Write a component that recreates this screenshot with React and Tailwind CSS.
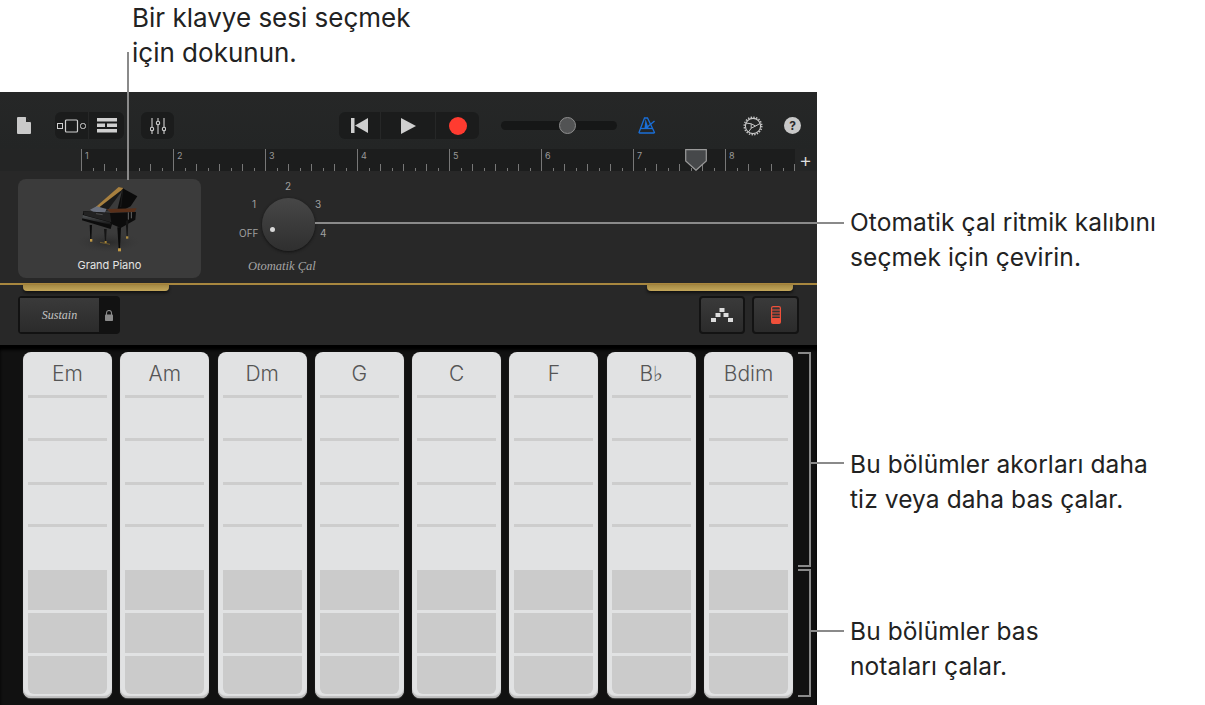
import React from 'react';

const chords = ['Em', 'Am', 'Dm', 'G', 'C', 'F', 'B♭', 'Bdim'];
const bars = [1, 2, 3, 4, 5, 6, 7, 8];
const ticks = [1, 2, 3, 4, 5, 6, 7];

const Piano = () => (
  <svg viewBox="0 0 300 225" className="w-[100px] h-[75px] shrink-0">
    <defs>
      <radialGradient id="floor">
        <stop offset="0%" stopColor="#222" stopOpacity="0.7" />
        <stop offset="100%" stopColor="#333" stopOpacity="0" />
      </radialGradient>
      <linearGradient id="front" x1="0" y1="0" x2="0" y2="1">
        <stop offset="0%" stopColor="#55585a" />
        <stop offset="100%" stopColor="#111" />
      </linearGradient>
    </defs>
    <ellipse cx="145" cy="190" rx="95" ry="30" fill="url(#floor)" />
    <path d="M188 28 L232 52 L212 82 L192 92 L172 92 Z" fill="#0b0b0b" />
    <path d="M178 25 L192 28 L142 95 L106 92 Z" fill="#1a1a1a" />
    <path d="M176 24 L190 27 L184 34 L108 92 L103 88 Z" fill="#a8803f" />
    <path d="M188 34 L182 84" stroke="#222" strokeWidth="2" fill="none" />
    <path d="M140 90 L230 88 L224 99 L152 101 Z" fill="#59301a" />
    <path d="M90 92 L110 82 L140 90 L134 101 L100 99 Z" fill="#6c7280" />
    <path d="M70 96 L100 98 L152 102 L228 99 L226 122 L182 147 L156 136 L152 150 L66 124 Z" fill="#0c0c0c" />
    <path d="M68 108 L150 130 L154 138 L66 118 Z" fill="url(#front)" />
    <path d="M70 97 L150 103 L154 130 L72 108 Z" fill="#222" />
    <path d="M108 104 L128 107" stroke="#777" strokeWidth="1.5" />
    <path d="M205 100 L205 122 M214 99 L214 118" stroke="#666" strokeWidth="3" />
    <path d="M89 138 L96 138 L94 180 L91 180 Z" fill="#0a0a0a" />
    <path d="M132 150 L140 150 L138 186 L135 186 Z" fill="#151515" />
    <path d="M172 145 L183 145 L180 208 L176 208 Z" fill="#0a0a0a" />
    <path d="M197 125 L205 122 L203 172 L200 172 Z" fill="#151515" />
    <path d="M120 190 L150 196" stroke="#6d5a2e" strokeWidth="3" />
    <rect x="90" y="180" width="7" height="8" fill="#c29a45" />
    <rect x="134" y="186" width="6" height="6" fill="#a58438" />
    <rect x="174" y="208" width="9" height="9" fill="#c29a45" />
    <rect x="198" y="172" width="7" height="7" fill="#b08e40" />
  </svg>
);

const ChordStrip = ({ name }) => (
  <div className="w-[89px] h-[346px] shrink-0 flex flex-col px-[5px] pb-1 rounded-lg bg-[#e1e2e3] shadow-[inset_0_-2px_1px_#bdbdbd,0_1px_1px_#555]">
    <div className="h-[43px] flex items-center justify-center text-[21px] font-light text-[#555]">{name}</div>
    <div className="h-[43px] border-t-[3px] border-[#cdcdcd]" />
    <div className="h-[44px] border-t-[3px] border-[#cdcdcd]" />
    <div className="h-[42px] border-t-[3px] border-[#cdcdcd]" />
    <div className="h-[46px] border-t-[3px] border-[#cdcdcd]" />
    <div className="flex flex-col gap-[3px]">
      <div className="h-[40px] bg-[#cbcbcb]" />
      <div className="h-[40px] bg-[#cbcbcb]" />
      <div className="h-[38px] bg-[#cbcbcb] rounded-b-md" />
    </div>
  </div>
);

const Ruler = () => (
  <div className="w-[714px] h-[22px] flex overflow-hidden bg-[#1c1d1d]">
    {bars.map(bar => (
      <div key={bar} className="relative w-[92px] h-full shrink-0 flex items-end border-l border-[#777]">
        <span className="absolute left-[3px] top-[1px] text-[9px] leading-[11px] text-[#999]">{bar}</span>
        {ticks.map(t => (
          <div key={t} className="w-[11.5px] flex justify-end items-end">
            <div className={t % 2 === 0 ? 'w-px h-[7px] bg-[#777]' : 'w-px h-[3px] bg-[#777]'} />
          </div>
        ))}
      </div>
    ))}
  </div>
);

export default function App() {
  return (
    <div className="relative w-[1205px] h-[705px] overflow-hidden bg-white text-[#222] font-['Inter',sans-serif]">
      <div className="h-[92px] pl-[132px] pt-0 text-[26px] leading-[35px]">
        Bir klavye sesi seçmek<br />için dokunun.
      </div>

      <div className="flex h-[613px]">
        <div className="w-[817px] shrink-0 flex flex-col bg-[#282828]">
          {/* Toolbar */}
          <div className="h-[57px] flex items-start pt-5 bg-gradient-to-b from-[#262727] to-[#232525]">
            <svg viewBox="0 0 14 17" className="w-[14px] h-[17px] ml-[17px] mt-[5px]">
              <path d="M1 0 H8.5 L14 5.5 V16 A1 1 0 0 1 13 17 H1 A1 1 0 0 1 0 16 V1 A1 1 0 0 1 1 0Z" fill="#c9c9c9" />
              <path d="M9 0 L14 5 H9Z" fill="#262727" />
            </svg>
            <div className="ml-6 w-[69px] h-[27px] flex rounded-md bg-[#1b1c1c]">
              <div className="w-[34px] flex items-center justify-center border-r border-[#262727]">
                <svg viewBox="0 0 29 14" className="w-[29px] h-[14px]" fill="none" stroke="#cfcfcf">
                  <rect x="0.5" y="4.5" width="5" height="5" />
                  <rect x="8.5" y="1" width="12" height="12" rx="1" strokeWidth="1.2" />
                  <rect x="23.5" y="4.5" width="5" height="5" rx="2" />
                </svg>
              </div>
              <div className="flex-1 flex items-center justify-center">
                <svg viewBox="0 0 20 15" className="w-5 h-[15px]" fill="#d0d0d0">
                  <rect x="0" y="0" width="20" height="3.5" />
                  <rect x="0" y="5.5" width="8" height="3.5" />
                  <rect x="10" y="5.5" width="10" height="3.5" />
                  <rect x="0" y="11" width="20" height="3.5" />
                </svg>
              </div>
            </div>
            <div className="ml-[17px] w-[33px] h-[27px] flex items-center justify-center rounded-md bg-[#1b1c1c]">
              <svg viewBox="0 0 16 16" className="w-4 h-4" fill="none" stroke="#cfcfcf" strokeWidth="1.1">
                <path d="M2 0 V9 M2 13 V16 M8 0 V3 M8 7 V16 M14 0 V9 M14 13 V16" />
                <circle cx="2" cy="11" r="1.7" />
                <circle cx="8" cy="5" r="1.7" />
                <circle cx="14" cy="11" r="1.7" />
              </svg>
            </div>
            <div className="ml-[165px] w-[140px] h-[27px] flex rounded-md bg-[#1b1c1c]">
              <div className="w-[42px] flex items-center justify-center border-r border-[#262727]">
                <svg viewBox="0 0 17 15" className="w-[17px] h-[15px]" fill="#cfcfcf">
                  <rect x="0" y="0" width="3.5" height="15" />
                  <path d="M17 0 V15 L4 7.5Z" />
                </svg>
              </div>
              <div className="w-[55px] flex items-center justify-center border-r border-[#262727]">
                <svg viewBox="0 0 15 16" className="w-[15px] h-4" fill="#cfcfcf"><path d="M0 0 L15 8 L0 16Z" /></svg>
              </div>
              <div className="flex-1 flex items-center justify-center">
                <div className="w-[18px] h-[18px] rounded-full bg-[#ff3b30]" />
              </div>
            </div>
            <div className="relative ml-[22px] mt-[9px] w-[116px] h-[9px] rounded-full bg-[#161717]">
              <div className="absolute left-[58px] top-[-4px] w-[17px] h-[17px] rounded-full bg-[#525354] border border-[#8d8d8d]" />
            </div>
            <svg viewBox="0 0 18 17" className="w-[18px] h-[17px] ml-[21px] mt-[5px]" fill="none" stroke="#1a6fd8" strokeWidth="1.3">
              <path d="M6.5 1 H9.5 L16.5 15.5 A0.8 0.8 0 0 1 16 16 H1.5 A0.8 0.8 0 0 1 1 15.5Z" />
              <path d="M2.8 11.5 H14.5" />
              <path d="M7.5 11.5 L16.5 4" />
              <path d="M7.5 2 L6.5 11 H10.5Z" fill="#1a6fd8" stroke="none" />
            </svg>
            <svg viewBox="0 0 20 20" className="w-5 h-5 ml-[87px] mt-1" fill="none" stroke="#c8c8c8">
              <circle cx="10" cy="10" r="7.6" strokeWidth="1.1" />
              <circle cx="10" cy="10" r="8.8" strokeWidth="1.4" strokeDasharray="1.4 1.37" />
              <path d="M8.2 7.8 L12.6 10 L8.2 12.2Z" strokeWidth="1" />
              <path d="M2.8 7 L8.2 7.8 M12.6 10 L17 7.5 M8.2 12.2 L5.5 16" strokeWidth="1" />
            </svg>
            <div className="ml-[21px] mt-[5px] w-[17px] h-[17px] rounded-full bg-[#c8c8c8] flex items-center justify-center text-[12px] leading-none font-bold text-[#2a2a2a]">?</div>
          </div>

          {/* Ruler */}
          <div className="relative h-[22px] flex items-center pl-[81px] bg-[#242525]">
            <Ruler />
            <span className="ml-[4px] text-[20px] leading-none font-light text-[#e0e0e0]">+</span>
            <svg viewBox="0 0 22 22" className="absolute left-[685px] top-0 w-[22px] h-[22px]">
              <path d="M0.7 0.7 H21.3 V12 L11 21.3 L0.7 12Z" fill="#46484a" stroke="#9a9a9a" strokeWidth="1.2" />
            </svg>
          </div>

          {/* Instrument + autoplay */}
          <div className="relative h-[112px] pt-2 pl-[18px] bg-[#282828]">
            <div className="w-[183px] h-[99px] flex flex-col items-center rounded-lg bg-[#3b3b3b]">
              <Piano />
              <div className="mt-[4px] text-[11px] leading-[14px] text-[#e4e4e4]">Grand Piano</div>
            </div>
            <span className="absolute left-[285px] top-[9px] text-[10px] leading-[13px] text-[#a0a0a0]">2</span>
            <span className="absolute left-[252px] top-[27px] text-[10px] leading-[13px] text-[#a0a0a0]">1</span>
            <span className="absolute left-[315px] top-[27px] text-[10px] leading-[13px] text-[#a0a0a0]">3</span>
            <span className="absolute left-[239px] top-[56px] text-[10px] leading-[13px] text-[#a0a0a0]">OFF</span>
            <span className="absolute left-[320px] top-[56px] text-[10px] leading-[13px] text-[#a0a0a0]">4</span>
            <div className="absolute left-[262px] top-[27px] w-[53px] h-[53px] rounded-full bg-gradient-to-b from-[#474747] to-[#2f2f2f] shadow-[0_1px_3px_#111]">
              <div className="absolute left-[8px] top-[29px] w-[5px] h-[5px] rounded-full bg-[#d8d8d8]" />
            </div>
            <span className="absolute left-[248px] top-[87px] text-[12.5px] leading-[16px] italic font-['Liberation_Serif',serif] text-[#a5a5a5]">Otomatik Çal</span>
          </div>

          {/* Gold rail */}
          <div className="h-[2px] bg-[#a8873f]" />

          {/* Sustain row */}
          <div className="relative h-[60px] bg-[#282828] flex items-start justify-between pl-[18px] pr-[18px] pt-[11px]">
            <div className="absolute left-[23px] top-0 w-[146px] h-[6px] rounded-b-sm bg-gradient-to-b from-[#a58a45] to-[#c4a75a] shadow-[0_2px_3px_#111]" />
            <div className="absolute left-[647px] top-0 w-[146px] h-[6px] rounded-b-sm bg-gradient-to-b from-[#a58a45] to-[#c4a75a] shadow-[0_2px_3px_#111]" />
            <div className="w-[102px] h-[38px] flex rounded-[4px] bg-[#121212] p-[2px]">
              <div className="w-[79px] flex items-center justify-center bg-gradient-to-b from-[#3a3a3a] to-[#2b2b2b] text-[12px] italic font-['Liberation_Serif',serif] text-[#c4c4c4]">Sustain</div>
              <div className="flex-1 flex items-center justify-center">
                <svg viewBox="0 0 8 11" className="w-2 h-[11px]" fill="#8a8a8a">
                  <rect x="0" y="4.5" width="8" height="6.5" rx="0.8" />
                  <path d="M1.5 5 V3 A2.5 2.5 0 0 1 6.5 3 V5" fill="none" stroke="#8a8a8a" strokeWidth="1.1" />
                </svg>
              </div>
            </div>
            <div className="flex gap-[7px]">
              <div className="w-[46px] h-[38px] flex items-center justify-center rounded-[4px] border-2 border-[#131313] bg-gradient-to-b from-[#3a3a3a] to-[#2b2b2b]">
                <svg viewBox="0 0 22 14" className="w-[22px] h-[14px]" fill="#dcdcdc">
                  <rect x="8.5" y="0" width="5" height="4" />
                  <rect x="4.5" y="5" width="5" height="4" />
                  <rect x="12.5" y="5" width="5" height="4" />
                  <rect x="0" y="10" width="5" height="4" />
                  <rect x="17" y="10" width="5" height="4" />
                </svg>
              </div>
              <div className="w-[47px] h-[38px] flex items-center justify-center rounded-[4px] border-2 border-[#131313] bg-gradient-to-b from-[#3a3a3a] to-[#2b2b2b]">
                <svg viewBox="0 0 10 18" className="w-[10px] h-[18px]">
                  <rect x="0.6" y="0.6" width="8.8" height="16.8" rx="1.5" fill="none" stroke="#f0503a" strokeWidth="1.2" />
                  <path d="M1 4 H9 M1 7 H9 M1 10 H9" stroke="#f0503a" />
                  <path d="M0.6 12 H9.4 V16 A1.4 1.4 0 0 1 8 17.4 H2 A1.4 1.4 0 0 1 0.6 16Z" fill="#f0503a" />
                </svg>
              </div>
            </div>
          </div>

          {/* Chord strips */}
          <div className="flex-1 flex gap-[8.3px] pl-[23px] pt-[7px] bg-[#111] shadow-[inset_0_5px_3px_#000]">
            {chords.map(name => <ChordStrip key={name} name={name} />)}
          </div>
        </div>

        <div className="flex-1 pl-[33px] text-[24.5px] leading-[34.5px] tracking-[0.1px]">
          <div className="mt-[113px]">Otomatik çal ritmik kalıbını<br />seçmek için çevirin.</div>
          <div className="mt-[173px]">Bu bölümler akorları daha<br />tiz veya daha bas çalar.</div>
          <div className="mt-[98px]">Bu bölümler bas<br />notaları çalar.</div>
        </div>
      </div>

      {/* Callout lines */}
      <div className="absolute left-[127px] top-[52px] w-[2px] h-[128px] bg-[#8a8a8a]" />
      <div className="absolute left-[315px] top-[222px] w-[529px] h-[2px] bg-[#8a8a8a]" />
      <div className="absolute left-[798px] top-[352px] w-[13px] h-[215px] border-t-2 border-r-2 border-b-2 border-[#8a8a8a]" />
      <div className="absolute left-[798px] top-[569px] w-[13px] h-[128px] border-t-2 border-r-2 border-b-2 border-[#8a8a8a]" />
      <div className="absolute left-[811px] top-[462px] w-[33px] h-[2px] bg-[#8a8a8a]" />
      <div className="absolute left-[811px] top-[630px] w-[33px] h-[2px] bg-[#8a8a8a]" />
    </div>
  );
}
